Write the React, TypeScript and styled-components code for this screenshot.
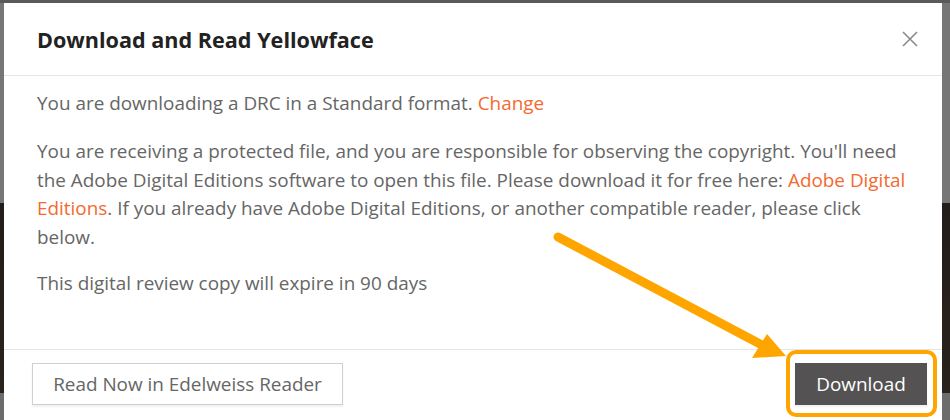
import React from 'react';
import styled, { createGlobalStyle } from 'styled-components';

const GlobalStyle = createGlobalStyle`
  html, body {
    margin: 0;
    padding: 0;
    width: 950px;
    height: 420px;
    overflow: hidden;
  }
  body {
    font-family: 'Open Sans', 'Liberation Sans', sans-serif;
  }
`;

const Page = styled.div`
  position: relative;
  width: 950px;
  height: 420px;
  box-sizing: border-box;
  padding: 0 8px 0 4px;
  border-top: 3px solid #5a5a5a;
  background: linear-gradient(
    to bottom,
    #767676 0,
    #767676 200px,
    #221d1a 200px,
    #2a221c 390px,
    #6c6c6c 390px
  );
`;

const Modal = styled.div`
  height: 417px;
  background: #fff;
  display: flex;
  flex-direction: column;
`;

const Header = styled.div`
  height: 72px;
  flex: none;
  display: flex;
  align-items: center;
  justify-content: space-between;
  padding: 0 20px 0 33px;
  border-bottom: 1px solid #e5e5e5;
`;

const Title = styled.h2`
  margin: 0;
  font-size: 21.6px;
  font-weight: 700;
  color: #222;
`;

const CloseButton = styled.button`
  width: 24px;
  height: 24px;
  padding: 0;
  border: 0;
  background: none;
  display: flex;
  align-items: center;
  justify-content: center;
  cursor: pointer;
`;

const Body = styled.div`
  flex: 1;
  padding: 13px 32px 0 33px;
`;

const Paragraph = styled.p<{ $gap: number }>`
  margin: 0 0 ${(p) => p.$gap}px;
  font-size: 18.9px;
  line-height: 28.4px;
  color: #666;
`;

const Link = styled.a`
  color: #f4692d;
  text-decoration: none;
  cursor: pointer;
`;

const Footer = styled.div`
  flex: none;
  height: 71px;
  box-sizing: border-box;
  border-top: 1px solid #e5e5e5;
  display: flex;
  align-items: flex-start;
  justify-content: space-between;
  padding: 13px 15px 0 28px;
`;

const Button = styled.button<{ $primary?: boolean }>`
  height: 42px;
  box-sizing: border-box;
  padding: 0;
  font-family: 'Open Sans', 'Liberation Sans', sans-serif;
  font-size: 18.9px;
  cursor: pointer;
  border: 1px solid ${(p) => (p.$primary ? '#545252' : '#cfcfcf')};
  background: ${(p) => (p.$primary ? '#545252' : '#fff')};
  color: ${(p) => (p.$primary ? '#fff' : '#666')};
  width: ${(p) => (p.$primary ? '132px' : '311px')};
  box-shadow: 0 2px 2px rgba(0, 0, 0, 0.06);
`;

const Highlight = styled.div`
  position: absolute;
  left: 786px;
  top: 347px;
  width: 151px;
  height: 67px;
  box-sizing: border-box;
  border: 4px solid #ffa500;
  border-radius: 10px;
  pointer-events: none;
`;

const ArrowLayer = styled.svg`
  position: absolute;
  left: 0;
  top: -3px;
  pointer-events: none;
`;

export default function App() {
  return (
    <>
      <GlobalStyle />
      <Page>
        <Modal>
          <Header>
            <Title>Download and Read Yellowface</Title>
            <CloseButton aria-label="Close">
              <svg width="16" height="16" viewBox="0 0 16 16">
                <path d="M1 1 L15 15 M15 1 L1 15" stroke="#8a8a8a" strokeWidth="1.6" fill="none" />
              </svg>
            </CloseButton>
          </Header>
          <Body>
            <Paragraph $gap={20}>
              You are downloading a DRC in a Standard format. <Link>Change</Link>
            </Paragraph>
            <Paragraph $gap={18}>
              You are receiving a protected file, and you are responsible for observing the copyright. You'll need
              the Adobe Digital Editions software to open this file. Please download it for free here:{' '}
              <Link>Adobe Digital Editions</Link>. If you already have Adobe Digital Editions, or another compatible
              reader, please click below.
            </Paragraph>
            <Paragraph $gap={0}>This digital review copy will expire in 90 days</Paragraph>
          </Body>
          <Footer>
            <Button>Read Now in Edelweiss Reader</Button>
            <Button $primary>Download</Button>
          </Footer>
        </Modal>
        <Highlight />
        <ArrowLayer width="950" height="420" viewBox="0 0 950 420">
          <line x1="558" y1="237" x2="762" y2="345" stroke="#ffa500" strokeWidth="9" strokeLinecap="round" />
          <polygon points="786,356 752,358 767,334" fill="#ffa500" />
        </ArrowLayer>
      </Page>
    </>
  );
}
